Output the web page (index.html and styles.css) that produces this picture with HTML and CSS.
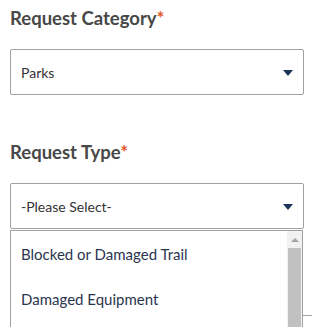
FILE: index.html
```html
<!DOCTYPE html>
<html lang="en">
<head>
  <meta charset="UTF-8" />
  <meta name="viewport" content="width=device-width, initial-scale=1.0"/>
  <title>Service Request</title>
  <link rel="stylesheet" href="styles.css">
</head>
<body>

  <div class="field">
    <label class="field-label">Request Category<span class="req">*</span></label>
    <div class="select">
      <span class="select-value">Parks</span>
      <svg class="caret" width="10" height="6" viewBox="0 0 10 6"><path d="M0 0h10L5 6z" fill="#1c3557"/></svg>
    </div>
  </div>

  <div class="field field-type">
    <label class="field-label">Request Type<span class="req">*</span></label>
    <div class="select-wrap">
      <div class="select">
        <span class="select-value">-Please Select-</span>
        <svg class="caret" width="10" height="6" viewBox="0 0 10 6"><path d="M0 0h10L5 6z" fill="#1c3557"/></svg>
      </div>

      <div class="menu">
        <ul class="menu-list">
          <li>Blocked or Damaged Trail</li>
          <li>Damaged Equipment</li>
        </ul>
        <div class="scrollbar">
          <div class="scroll-up"></div>
          <div class="scroll-thumb"></div>
        </div>
      </div>
    </div>
  </div>

  <div class="field-next"></div>

</body>
</html>
```

FILE: styles.css
```css
* {
  box-sizing: border-box;
  margin: 0;
  padding: 0;
}

body {
  font-family: 'Lato', 'Noto Sans', sans-serif;
  background: white;
  padding: 0 8px 0 10px;
  overflow: hidden;
  height: 327px;
}

.field-label {
  display: block;
  font-size: 18.5px;
  font-weight: 700;
  color: #484848;
  line-height: 22px;
  padding-top: 7px;
  margin-bottom: 20px;
}

.req {
  color: #e2572c;
}

.field-type {
  margin-top: 39px;
}

.select-wrap {
  position: relative;
}

.select {
  height: 46px;
  border: 1px solid #a0a0a0;
  border-radius: 2px;
  display: flex;
  align-items: center;
  justify-content: space-between;
  padding: 0 10px 0 10px;
  font-size: 14px;
  color: #333;
}

.caret {
  margin-top: 1px;
}

.menu {
  position: absolute;
  left: 0;
  right: 1px;
  top: 47px;
  height: 97px;
  background: white;
  border: 1px solid #a0a0a0;
  border-bottom: none;
  display: flex;
  z-index: 2;
}

.menu-list {
  list-style: none;
  flex: 1;
  padding-top: 1px;
}

.menu-list li {
  height: 45px;
  line-height: 45px;
  padding-left: 10px;
  font-size: 15px;
  color: #2b3550;
}

.scrollbar {
  width: 15px;
  background: #f1f1f1;
  display: flex;
  flex-direction: column;
}

.scroll-up {
  height: 17px;
  position: relative;
}

.scroll-up::after {
  content: "";
  position: absolute;
  left: 4px;
  top: 7px;
  border-left: 4px solid transparent;
  border-right: 4px solid transparent;
  border-bottom: 4px solid #a3a3a3;
}

.scroll-thumb {
  flex: 1;
  margin: 0 1px;
  background: #c1c1c1;
}

.field-next {
  margin-top: 86px;
  margin-left: 293px;
  margin-right: -8px;
  border-top: 1px solid #a0a0a0;
}
```
